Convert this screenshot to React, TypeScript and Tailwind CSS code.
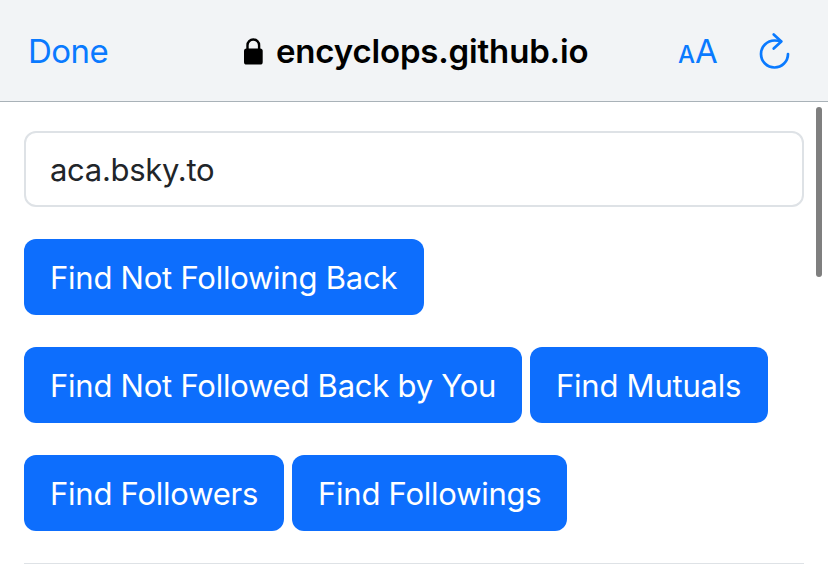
import React from 'react';

interface ActionButtonProps {
  label: string;
  width: string;
}

const ActionButton: React.FC<ActionButtonProps> = ({ label, width }) => (
  <button
    className={`${width} h-[76px] shrink-0 rounded-xl bg-[#0d6efd] px-[26px] pt-px text-left text-[31px] leading-[48px] tracking-[-0.24px] text-white whitespace-nowrap`}
  >
    {label}
  </button>
);

const BrowserBar = () => (
  <header className="flex h-[102px] shrink-0 items-center border-b border-[#a9b2b8] bg-[#f2f4f6] pl-[28px] pr-[37px]">
    <button className="w-[215px] pt-[2px] text-left text-[33px] tracking-[-0.5px] text-[#0a7aff]">Done</button>
    <svg className="h-[28px] w-[20px] shrink-0" viewBox="0 0 20 28" fill="none">
      <rect x="1" y="11.5" width="18.7" height="16" rx="2.6" fill="black" />
      <path d="M4.5 12.5V8.3a5.8 5.8 0 0 1 11.6 0V12.5" stroke="black" strokeWidth="2.4" />
    </svg>
    <h1 className="ml-[13px] w-[402px] pt-[2px] text-[33px] font-semibold tracking-[-0.17px] text-black">encyclops.github.io</h1>
    <button className="flex w-[80px] items-baseline pt-[2px] text-[#0a7aff]" aria-label="Text size">
      <span className="w-[17px] text-[24px] font-medium">A</span>
      <span className="text-[33px]">A</span>
    </button>
    <button aria-label="Reload">
      <svg className="block h-[37px] w-[32px]" viewBox="0 0 32 37" fill="none" stroke="#0a7aff" strokeWidth="2.7" strokeLinecap="round" strokeLinejoin="round">
        <path d="M23 9.2C21 8.6 19 8.5 16.5 8.5A13.5 13.5 0 1 0 30 22" />
        <path d="M15.7 2.4l7.6 7.1-7.6 7.1" />
      </svg>
    </button>
  </header>
);

const App = () => {
  return (
    <div className="relative flex h-[564px] w-[828px] flex-col overflow-hidden bg-white font-['Inter',sans-serif]">
      <BrowserBar />
      <main className="flex flex-col px-6 pt-[29px]">
        <input
          type="text"
          defaultValue="aca.bsky.to"
          className="h-[76px] w-full rounded-xl border-2 border-[#dee2e6] px-6 text-[31px] tracking-[-0.3px] text-[#212529]"
        />
        <div className="mt-8 flex">
          <ActionButton label="Find Not Following Back" width="w-[400px]" />
        </div>
        <div className="mt-8 flex gap-2">
          <ActionButton label="Find Not Followed Back by You" width="w-[498px]" />
          <ActionButton label="Find Mutuals" width="w-[238px]" />
        </div>
        <div className="mt-8 flex gap-2">
          <ActionButton label="Find Followers" width="w-[260px]" />
          <ActionButton label="Find Followings" width="w-[275px]" />
        </div>
        <hr className="mt-8 border-[#dee2e6]" />
      </main>
      {/* Scroll indicator */}
      <div className="absolute right-[6px] top-[107px] h-[170px] w-[6px] rounded-full bg-[#7f7f7f]" />
    </div>
  );
};

export default App;
